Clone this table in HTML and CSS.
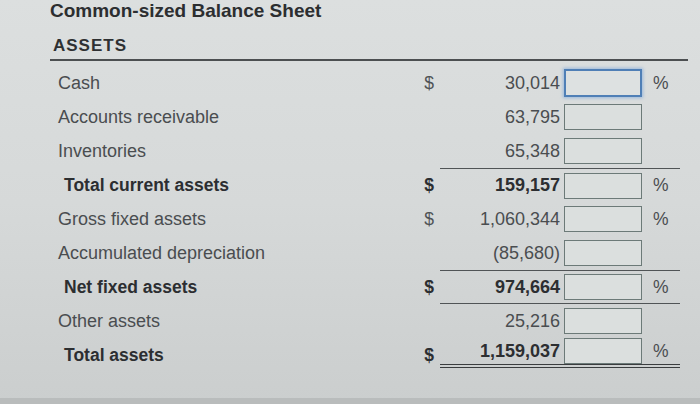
FILE: index.html
```html
<!DOCTYPE html>
<html>
<head>
<meta charset="utf-8">
<link rel="stylesheet" href="styles.css">
</head>
<body>
<div class="sheet">
  <h1 class="title">Common-sized Balance Sheet</h1>
  <div class="section">ASSETS</div>

  <div class="rows">
  <div class="row">
    <div class="label">Cash</div>
    <div class="dollar">$</div>
    <div class="right"><span class="num">30,014</span><span class="box focus"></span><span class="pct">%</span></div>
  </div>
  <div class="row">
    <div class="label">Accounts receivable</div>
    <div class="dollar"></div>
    <div class="right"><span class="num">63,795</span><span class="box"></span><span class="pct"></span></div>
  </div>
  <div class="row">
    <div class="label">Inventories</div>
    <div class="dollar"></div>
    <div class="right"><span class="num">65,348</span><span class="box"></span><span class="pct"></span></div>
  </div>
  <div class="row strong">
    <div class="label">Total current assets</div>
    <div class="dollar">$</div>
    <div class="right rule"><span class="num">159,157</span><span class="box"></span><span class="pct">%</span></div>
  </div>
  <div class="row">
    <div class="label">Gross fixed assets</div>
    <div class="dollar">$</div>
    <div class="right"><span class="num">1,060,344</span><span class="box"></span><span class="pct">%</span></div>
  </div>
  <div class="row">
    <div class="label">Accumulated depreciation</div>
    <div class="dollar"></div>
    <div class="right"><span class="num">(85,680)</span><span class="box"></span><span class="pct"></span></div>
  </div>
  <div class="row strong">
    <div class="label">Net fixed assets</div>
    <div class="dollar">$</div>
    <div class="right rule rule-bottom"><span class="num">974,664</span><span class="box"></span><span class="pct">%</span></div>
  </div>
  <div class="row">
    <div class="label">Other assets</div>
    <div class="dollar"></div>
    <div class="right"><span class="num">25,216</span><span class="box"></span><span class="pct"></span></div>
  </div>
  <div class="row strong total">
    <div class="label">Total assets</div>
    <div class="dollar">$</div>
    <div class="right double"><span class="num">1,159,037</span><span class="box"></span><span class="pct">%</span></div>
  </div>
  </div>
</div>
<div class="bottom-bar"></div>
</body>
</html>
```
FILE: styles.css
```css
html, body {
  margin: 0;
  padding: 0;
}
body {
  width: 700px;
  height: 404px;
  overflow: hidden;
  background: linear-gradient(180deg, #dcdfdf 0%, #d6d9d9 50%, #cbcece 100%);
  font-family: "Liberation Sans", Arial, sans-serif;
  color: #4a4d4f;
  position: relative;
}
.sheet {
  padding: 0 12px 0 50px;
}
.title {
  margin: 0;
  font-size: 19px;
  font-weight: bold;
  color: #2c2e30;
  line-height: 22px;
  height: 24px;
}
.section {
  font-size: 17px;
  font-weight: bold;
  letter-spacing: 1px;
  color: #2e3032;
  line-height: 20px;
  padding: 12px 0 3px 3px;
  border-bottom: 2px solid #4c4f51;
  width: 635px;
}
.rows {
  padding-top: 5px;
}
.row {
  display: grid;
  grid-template-columns: 368px 22px 240px;
  height: 34px;
  align-items: stretch;
}
.label {
  padding-left: 8px;
  font-size: 18px;
  display: flex;
  align-items: center;
  color: #4a4d50;
}
.dollar {
  display: flex;
  align-items: center;
  justify-content: center;
  font-size: 17.5px;
  color: #4f5356;
}
.right {
  display: flex;
  align-items: center;
  box-sizing: border-box;
  height: 34px;
}
.num {
  width: 124px;
  text-align: right;
  font-size: 18px;
  color: #4a4d50;
  padding-right: 4px;
  box-sizing: border-box;
}
.box {
  width: 78px;
  height: 26px;
  box-sizing: border-box;
  border: 1.5px solid #6c7a78;
  background: #dbdfde;
}
.box.focus {
  height: 28px;
  border: 2px solid #4f7fb6;
  box-shadow: 0 0 3px 1px rgba(110, 160, 220, 0.6);
  background: #dde1e1;
}
.pct {
  padding-left: 11px;
  font-size: 17.5px;
  color: #4a4d50;
}
.strong .label,
.strong .num,
.strong .dollar {
  font-weight: bold;
  color: #2c2e31;
}
.strong .label {
  font-size: 17.5px;
  padding-left: 14px;
}
.rule {
  border-top: 1.5px solid #505456;
}
.rule-bottom {
  border-bottom: 1.5px solid #505456;
}
.total .right {
  height: 30px;
  border-bottom: 4px double #3a3d3f;
}
.bottom-bar {
  position: absolute;
  left: 0;
  right: 0;
  bottom: 0;
  height: 6px;
  background: #b9bcbc;
}
```
